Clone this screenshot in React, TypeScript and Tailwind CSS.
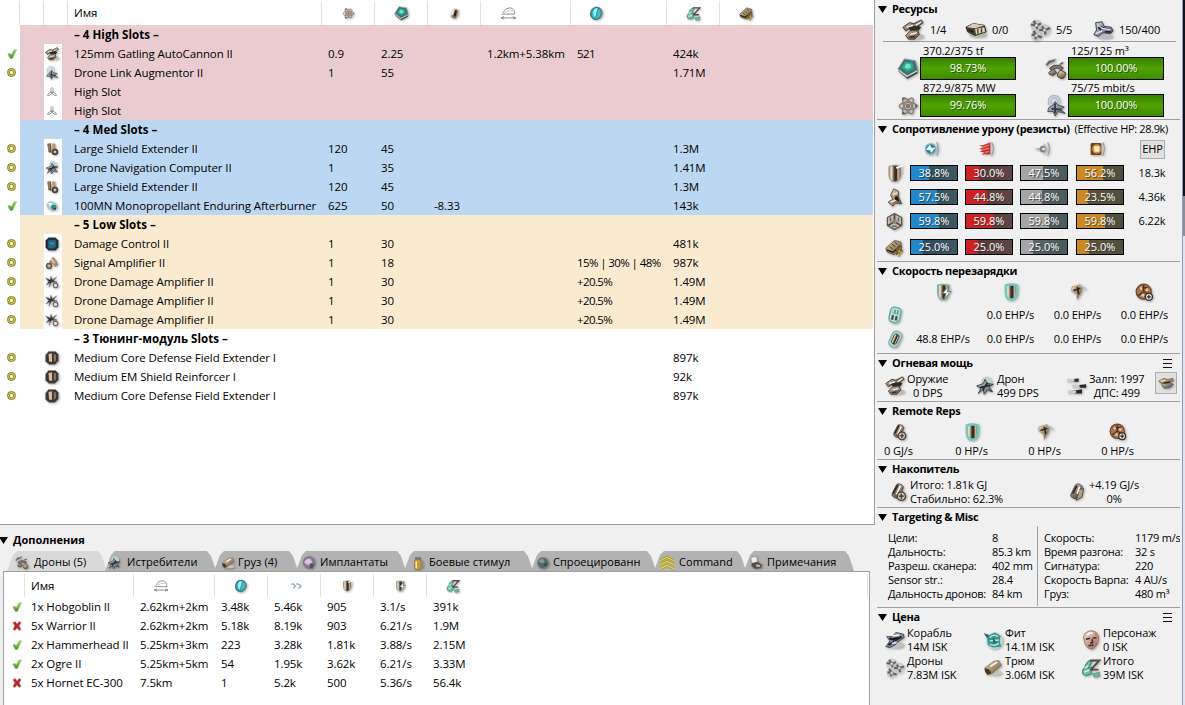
import type { ReactNode } from "react";

type IconName =
  | "check" | "ring" | "cross" | "gun" | "launcher" | "drones" | "fighter" | "cpu" | "atom" | "bay" | "antenna"
  | "em" | "thermal" | "kinetic" | "explosive" | "shield" | "armor" | "hull" | "pattern" | "shieldBolt"
  | "shieldGlow" | "armorRep" | "hullRep" | "battery2" | "battery1" | "drone" | "volley" | "cap" | "capPlain" | "capSwap"
  | "range" | "tracking" | "isk" | "speed" | "slot" | "extender" | "burner" | "control" | "signal" | "droneAmp"
  | "rig" | "implant" | "booster" | "globe" | "command" | "note" | "ship" | "fit" | "face" | "hold" | "gunSmall";

const shieldPath = "M5 3 Q12 1 20 3 L20 13 Q19 19 16 21 Q12 23 8 21 Q5 18 5 13Z";

const art: Record<IconName, ReactNode> = {
  check: <path d="M2 12 L7 10 L10 14 L17 2 L23 2 L13 23 L8 23Z" fill="url(#gGreen)" stroke="#7fae6c" strokeWidth="1" />,
  ring: (
    <g fill="none">
      <rect x="4.5" y="4.5" width="15" height="15" rx="6" stroke="#7f7c24" strokeWidth="7.5" />
      <rect x="4.5" y="4.5" width="15" height="15" rx="6" stroke="#cbc549" strokeWidth="3.4" />
    </g>
  ),
  cross: <path d="M2 4 L8 1 L12 7 L17 1 L22 4 L17 12 L22 20 L17 23 L12 17 L7 23 L2 20 L7 12Z" fill="#b3262b" stroke="#cf7777" strokeWidth="1" />,
  gun: (
    <g>
      <ellipse cx="16" cy="19" rx="8" ry="3" fill="#bdbab4" />
      <path d="M1 9 L8 4 L13 5 L21 1 L23 4 L16 9 L10 9 L4 13Z" fill="url(#gMetal)" stroke="#3b352e" />
      <path d="M7 9 L17 7 L21 9 L17 14 L9 13Z" fill="#322b24" />
      <path d="M9 13 L17 12 L19 17 L14 22 L7 22 L4 18Z" fill="url(#gMetal)" stroke="#4a4137" />
      <path d="M5 9 L12 7 M15 7 L21 3 M9 17 L16 15" stroke="#f4efe6" strokeWidth="1.6" />
      <path d="M8 20 L14 19" stroke="#2f2922" strokeWidth="1.6" />
    </g>
  ),
  gunSmall: (
    <g>
      <path d="M1 9 L9 5 L14 7 L22 5 L23 9 L14 11 L9 14 L4 12Z" fill="url(#gGold)" stroke="#6d5420" />
      <path d="M6 13 L16 11 L23 14 L18 19 L9 20 L6 16Z" fill="url(#gMetal)" stroke="#4f4f4f" />
      <path d="M4 9 L11 8" stroke="#ffe69c" strokeWidth="1.8" />
      <path d="M9 12 L18 11" stroke="#252525" strokeWidth="2.2" />
    </g>
  ),
  launcher: (
    <g>
      <ellipse cx="14" cy="17" rx="10" ry="3" fill="#b9b7ad" />
      <path d="M1 9 L9 5 L21 7 L23 14 L11 18 L3 14Z" fill="#4a4234" stroke="#2a261e" />
      <path d="M2 9 L9 5 L21 7 L11 10Z" fill="#d6cfb9" />
      <path d="M11 11 L21 9 L22 14 L12 17Z" fill="#d9cfae" />
      <path d="M14 11 V16 M18 10 V15" stroke="#4a4132" strokeWidth="1.4" />
      <path d="M3 11 L9 13 L9 15 L4 13Z" fill="#1c1812" />
    </g>
  ),
  drones: (
    <g>
      <g fill="none" stroke="#c2c2c2" strokeWidth="1.3">
        <circle cx="8" cy="7" r="5.5" /><circle cx="17" cy="12" r="5.5" /><circle cx="8" cy="18" r="5" />
      </g>
      <g stroke="#5f5f5f" strokeWidth="2.4" fill="none" strokeLinejoin="round">
        <path d="M2 6 L8 7 L13 5 M5 2 L8 7 L9 11" />
        <path d="M11 12 L17 12 L23 10 M14 8 L17 12 L18 17" />
        <path d="M3 17 L8 18 L14 20 M5 13 L8 18 L7 22" />
      </g>
      <g fill="#e2e2e2" stroke="#777" strokeWidth=".8"><circle cx="8" cy="7" r="1.8" /><circle cx="17" cy="12" r="1.8" /><circle cx="8" cy="18" r="1.8" /></g>
    </g>
  ),
  fighter: (
    <g>
      <ellipse cx="14" cy="19" rx="9" ry="2.5" fill="#b9bac4" />
      <path d="M4 4 L11 3 L13 8 L21 9 L23 13 L20 16 L12 15 L7 19 L2 17 L5 12Z" fill="url(#gSteel)" stroke="#3c3e4c" />
      <path d="M6 6 L11 10 L20 12 M4 16 L11 13" stroke="#e8ebf6" strokeWidth="1.3" />
      <path d="M7 9 L10 12 M14 14 L21 14" stroke="#262835" strokeWidth="2" />
    </g>
  ),
  cpu: (
    <g>
      <path d="M1 12 L11 20 L11 23 L2 15Z" fill="#6d7b7e" />
      <path d="M11 20 L23 14 L22 17 L11 23Z" fill="#394345" />
      <path d="M8 1 L20 3 L23 14 L11 20 L1 12Z" fill="#3f7370" stroke="#91a0a1" />
      <path d="M9 4 L17 5 L18 12 L11 15 L5 11Z" fill="#2da590" />
      <path d="M10 6 L15 7 L15 11 L11 12 L8 10Z" fill="#6ee3c8" />
      <path d="M2 13 L11 20 L22 14" stroke="#d5dbdb" fill="none" strokeWidth="1.2" />
    </g>
  ),
  atom: (
    <g fill="none" stroke="#8b8178" strokeWidth="1.6">
      <ellipse cx="12" cy="12" rx="9.5" ry="4" />
      <ellipse cx="12" cy="12" rx="9.5" ry="4" transform="rotate(60 12 12)" />
      <ellipse cx="12" cy="12" rx="9.5" ry="4" transform="rotate(120 12 12)" />
      <circle cx="12" cy="12" r="2.4" fill="#8e6f5c" stroke="none" />
      <g fill="#6e665f" stroke="none"><circle cx="7" cy="4" r="1.6" /><circle cx="21" cy="12" r="1.6" /><circle cx="7" cy="20" r="1.6" /></g>
    </g>
  ),
  bay: (
    <g>
      <path d="M1 7 L4 3 L12 1 L10 4 L5 6 L2 9Z" fill="#5d5c57" stroke="#a8a69d" />
      <path d="M5 11 L10 8 L16 8 L20 11 L17 13 L15 11 L11 11 L8 15Z" fill="#847a6c" stroke="#3c3833" />
      <path d="M4 16 L9 12 L13 16 L9 19 L5 18Z" fill="url(#gMetal)" stroke="#474037" />
      <path d="M16 7 L20 5" stroke="#6f6a60" strokeWidth="1.8" />
      <rect x="14" y="14" width="8" height="8" rx="3" transform="rotate(25 18 18)" fill="url(#gBronze)" stroke="#534839" />
    </g>
  ),
  antenna: (
    <g>
      <g fill="none" stroke="#9fb4cd" strokeWidth="1.1"><circle cx="10" cy="7" r="6.5" /><circle cx="10" cy="7" r="3.6" /></g>
      <path d="M4 14 L9 11 L11 7 L14 11 L21 13 L17 16 L22 20 L14 18 L11 23 L9 18 L3 18Z" fill="url(#gSteel)" stroke="#4a4d58" />
      <path d="M11 9 V20 M7 15 L18 16" stroke="#353b49" strokeWidth="2" />
    </g>
  ),
  em: (
    <g>
      <circle cx="10" cy="12" r="8" fill="#327c93" stroke="#90bdc9" strokeWidth="2" />
      <path d="M3 13 L9 5 L11 10 L17 10 L11 18 L9 14Z" fill="#e6faff" />
      <path d="M19 2 Q24 12 19 22" fill="none" stroke="#989898" strokeWidth="1.8" />
    </g>
  ),
  thermal: (
    <g>
      <path d="M0 7 L7 6 L17 2 L17 20 L8 20 L4 21 L8 17 L1 16 L7 13 L0 12 L8 9Z" fill="#c3322d" />
      <path d="M7 9 L15 6 M6 13 L15 11 M9 17 L15 16" stroke="#f2a08a" strokeWidth="1.4" />
      <path d="M19 2 Q24 12 19 22" fill="none" stroke="#989898" strokeWidth="1.8" />
    </g>
  ),
  kinetic: (
    <g>
      <path d="M1 11 L9 10 L9 14 L1 13Z" fill="#b8b8b8" />
      <circle cx="12" cy="12" r="4.5" fill="#8e8e8e" stroke="#686868" />
      <circle cx="13" cy="12" r="2" fill="#eee" />
      <path d="M13 4 Q21 12 13 20" fill="none" stroke="#b9b9b9" strokeWidth="1.8" />
      <path d="M19 2 Q24 12 19 22" fill="none" stroke="#989898" strokeWidth="1.8" />
    </g>
  ),
  explosive: (
    <g>
      <rect x="1" y="3" width="16" height="18" rx="2" fill="#704122" />
      <circle cx="10" cy="12" r="7" fill="#e38b3b" />
      <path d="M6 8 L14 8 L14 16 L7 16Z" fill="#fff3cf" />
      <path d="M19 2 Q24 12 19 22" fill="none" stroke="#989898" strokeWidth="1.8" />
    </g>
  ),
  shield: (
    <g>
      <circle cx="14" cy="8" r="8" fill="#dcd9d2" />
      <path d={shieldPath} fill="url(#gPlate)" stroke="#8c7f70" />
      <path d="M14 5 L23 2" stroke="#fff" strokeWidth="2" />
    </g>
  ),
  armor: (
    <g>
      <path d="M11 1 L17 4 L17 11 L21 20 L13 19 L10 23 L4 18 L10 14 L7 9Z" fill="url(#gBronze)" stroke="#4b4035" />
      <path d="M10 8 L16 6 M7 18 L14 15" stroke="#efe7db" strokeWidth="1.8" />
      <path d="M12 11 L16 10 L18 17 L13 15Z" fill="#211b17" />
    </g>
  ),
  hull: (
    <g>
      <path d="M12 2 L21 7 L21 17 L12 22 L3 17 L3 7Z" fill="#c3bfb6" stroke="#5e574e" strokeWidth="1.6" />
      <path d="M12 3 V12 L4 17 M12 12 L20 17" stroke="#544c43" strokeWidth="2.4" fill="none" />
      <circle cx="12" cy="12" r="3" fill="#8d8376" />
      <path d="M7 7 V12 M17 7 V12 M9 18 L15 18" stroke="#6e665c" strokeWidth="2" />
    </g>
  ),
  pattern: (
    <g>
      <path d="M1 13 L12 3 L20 5 L21 12 L12 21 L3 18Z" fill="url(#gGold)" stroke="#5a4d36" />
      <path d="M2 15 L10 18 L19 10" stroke="#2f2619" strokeWidth="2" fill="none" />
      <path d="M6 11 L10 14 M9 8 L13 11 M12 5 L16 8" stroke="#3e3222" strokeWidth="1.2" />
      <path d="M14 13 L20 9 L22 16 L14 22Z" fill="#6b5943" />
      <path d="M20 12 L15 19 L19 18 L17 24 L23 16 L19 17Z" fill="#e0b93b" stroke="#6c551a" strokeWidth=".6" />
    </g>
  ),
  shieldBolt: (
    <g>
      <path d={shieldPath} fill="url(#gPlate)" stroke="#79b5a5" strokeWidth="2" />
      <path d="M19 5 L11 14 L16 14 L13 22 L23 11 L18 12Z" fill="#f5f5ef" stroke="#615f56" />
    </g>
  ),
  shieldGlow: <path d={shieldPath} fill="url(#gPlate)" stroke="#6bcdc1" strokeWidth="3" />,
  armorRep: (
    <g>
      <path d="M4 5 L15 2 L18 7 L17 12 L11 22 L10 15 L3 10Z" fill="url(#gBronze)" stroke="#b2a085" />
      <path d="M11 5 L13 15 M6 10 L15 7" stroke="#33281d" strokeWidth="2.2" />
      <path d="M15 5 Q20 3 23 10" fill="none" stroke="#a9c3cf" strokeWidth="1.4" />
    </g>
  ),
  hullRep: (
    <g>
      <circle cx="11" cy="11" r="9.5" fill="#a87550" stroke="#6b4a33" strokeWidth="1.6" />
      <path d="M11 2 V11 L4 16 M11 11 L18 15 M5 7 L16 6" stroke="#4c3021" strokeWidth="1.7" fill="none" />
      <g fill="#e8caa7"><circle cx="7.5" cy="7" r="1.8" /><circle cx="15" cy="8.5" r="1.8" /><circle cx="10" cy="15.5" r="1.8" /></g>
      <circle cx="17.5" cy="17.5" r="4.5" fill="#efe9e1" stroke="#3a3028" strokeWidth="1.7" />
      <path d="M15 17.5 H20 M17.5 15 V20" stroke="#2b241e" strokeWidth="1.5" />
    </g>
  ),
  battery2: (
    <g transform="rotate(12 12 12)">
      <rect x="5" y="2" width="14" height="20" rx="5" fill="#bfe0da" stroke="#62b3aa" strokeWidth="2" />
      <path d="M8 5 H16 V11 H8Z" fill="#5aa39a" />
      <path d="M9 4 V12 M13 4 V12" stroke="#dff5f1" />
      <path d="M8 13 H11 V19 H8Z M13 13 H16 V19 H13Z" fill="#4f463d" />
    </g>
  ),
  battery1: (
    <g>
      <rect x="6" y="1" width="13" height="22" rx="6" transform="rotate(24 12 12)" fill="#a9d4cd" stroke="#78b6ae" strokeWidth="1.6" />
      <rect x="9" y="5" width="7" height="14" rx="3" transform="rotate(24 12 12)" fill="url(#gPlate)" stroke="#443d33" />
    </g>
  ),
  drone: (
    <g>
      <circle cx="14" cy="7" r="6.5" fill="#bcd3ce" />
      <path d="M2 12 L10 9 L12 4 L15 9 L22 10 L17 13 L21 19 L15 17 L11 22 L10 16 L4 21 L7 15Z" fill="url(#gSteel)" stroke="#41484a" strokeWidth="1.2" />
      <path d="M6 14 L18 11 M9 17 L15 8" stroke="#262d2e" strokeWidth="2" />
    </g>
  ),
  volley: (
    <g>
      <path d="M4 4 L14 3 L14 7 L8 7Z M12 11 L23 10 L23 14 L16 14Z M5 18 L18 16 L18 21 L10 21Z" fill="#26282b" />
      <path d="M0 5 H9 M6 12 H15 M1 19 H11" stroke="#c5d0cf" strokeWidth="3" />
    </g>
  ),
  cap: (
    <g>
      <rect x="7" y="2" width="9" height="17" rx="3" transform="rotate(26 11 11)" fill="url(#gMetal)" stroke="#574d43" />
      <path d="M12 3 L6 14" stroke="#352c26" strokeWidth="2.4" />
      <path d="M15 5 L10 15" stroke="#fff" strokeWidth="1.6" />
      <circle cx="16" cy="17" r="5" fill="#d2c5b6" stroke="#544639" strokeWidth="1.8" />
      <path d="M13 17 H19 M16 14 V20" stroke="#392e25" strokeWidth="1.5" />
    </g>
  ),
  capPlain: (
    <g>
      <rect x="7" y="3" width="11" height="18" rx="5" transform="rotate(20 12 12)" fill="url(#gBronze)" stroke="#c0ad92" />
      <path d="M15 6 L12 17" stroke="#2d231a" strokeWidth="4" />
      <path d="M10 6 L7 15" stroke="#fff4e2" strokeWidth="2" />
    </g>
  ),
  capSwap: (
    <g>
      <rect x="7" y="2" width="9" height="18" rx="3" transform="rotate(26 11 11)" fill="url(#gMetal)" stroke="#574d43" />
      <path d="M12 4 L7 14" stroke="#352c26" strokeWidth="2.4" />
      <path d="M14 9 L20 8 L18 18 L11 22 L13 16Z" fill="#b3a084" stroke="#473b2b" />
      <path d="M15 6 L12 14" stroke="#fff" strokeWidth="1.8" />
    </g>
  ),
  range: (
    <g fill="none" stroke="#858585" strokeWidth="1.5">
      <path d="M3 11 Q7 3 15 3 Q22 4 22 13 H1" />
      <path d="M5 10 Q12 6 20 8" stroke="#c9c9c9" />
      <path d="M0 19 H24 M5 17 L0 19 L5 21 M19 17 L24 19 L19 21" />
    </g>
  ),
  tracking: (
    <g>
      <ellipse cx="11.5" cy="12" rx="8.5" ry="9.5" transform="rotate(20 12 12)" fill="#32c2d3" stroke="#467880" strokeWidth="2.6" />
      <path d="M8 6 Q12 2 14 5 L10 18 Q5 13 8 6Z" fill="#9df0f5" />
      <path d="M14 5 L11 19" stroke="#3e8994" strokeWidth="1.4" />
      <path d="M19 5 Q24 12 17 20" stroke="#8a8478" strokeWidth="1.7" fill="none" />
    </g>
  ),
  isk: (
    <g>
      <path d="M5 10 Q9 1 13 4 L9 12 L13 11 L12 19 L7 21 Q1 21 2 15Z" fill="#6fbfaa" stroke="#3c8a78" strokeWidth="1.4" />
      <path d="M4 12 L9 9 M4 17 L11 14" stroke="#ddf7ee" strokeWidth="1.5" />
      <path d="M11 3 H22 L12 14 H21" fill="none" stroke="#524b4a" strokeWidth="2.3" />
      <path d="M14 19 L22 17 L22 22 L16 23Z" fill="#69baa5" stroke="#4c9a86" />
    </g>
  ),
  speed: <path d="M3 7 L9 12 L5 17 M13 7 L20 12 L15 17 M0 8 H4 M10 8 H14" fill="none" stroke="#859eab" strokeWidth="2.4" />,
  slot: (
    <g fill="none" stroke="#858585" strokeWidth="1.6">
      <path d="M10 12 L10 5 Q12 1 14 5 L14 12 L20 16 Q23 20 18 19 L12 15 L6 19 Q1 20 4 16Z" />
      <circle cx="12" cy="13" r="1.6" fill="#777" />
    </g>
  ),
  extender: (
    <g>
      <path d="M4 3 L10 2 L11 19 L6 17Z" fill="#6b5134" />
      <path d="M12 2 L18 3 L18 13 L13 18Z" fill="#b99a7c" />
      <path d="M7 4 V15" stroke="#cdb79c" strokeWidth="1.4" />
      <circle cx="17" cy="17" r="5" fill="#6f594a" stroke="#3c2e25" strokeWidth="1.5" />
      <circle cx="17" cy="17" r="1.8" fill="#ece1d7" />
    </g>
  ),
  burner: (
    <g>
      <ellipse cx="12" cy="12" rx="9" ry="7" transform="rotate(25 12 12)" fill="#b7c9c8" stroke="#98b5b3" />
      <ellipse cx="15" cy="14" rx="4.5" ry="4" fill="#208e8c" />
      <path d="M5 7 L13 7 L9 13Z" fill="#f6ffff" />
      <path d="M13 17 L19 15 L18 19Z" fill="#2f3f40" />
    </g>
  ),
  control: (
    <g>
      <path d="M6 1 H18 L23 6 V18 L18 23 H6 L1 18 V6Z" fill="#20303d" />
      <path d="M6 6 H18 V17 L14 19 H6Z" fill="#1c6f87" stroke="#34586a" strokeWidth="1.6" />
      <path d="M9 11 H15" stroke="#3fa3b8" strokeWidth="2" />
    </g>
  ),
  signal: (
    <g>
      <path d="M8 10 L14 2 L19 8 L22 15 L17 18 L13 11 L10 15Z" fill="#b78d6c" stroke="#8c6549" />
      <path d="M10 4 L16 12" stroke="#ecd9c8" strokeWidth="2.4" />
      <circle cx="7" cy="17" r="4.8" fill="#8a7e65" stroke="#4c4535" strokeWidth="1.6" />
      <circle cx="7" cy="17" r="1.5" fill="#e5dfcc" />
    </g>
  ),
  droneAmp: (
    <g>
      <path d="M1 5 L9 8 L10 2 L13 8 L20 3 L15 10 L18 12 L11 13 L7 21 L8 14 L2 17 L6 11Z" fill="#30363b" stroke="#848b8f" />
      <circle cx="18" cy="18" r="3.8" fill="#e8e2da" stroke="#6b6052" strokeWidth="2" />
      <path d="M14 12 H21" stroke="#5c544a" strokeWidth="1.8" />
    </g>
  ),
  rig: (
    <g>
      <path d="M6 1 H18 L23 6 V17 L17 23 H7 L1 18 V7Z" fill="#3a3534" stroke="#8c8684" />
      <path d="M6 5 L12 4 V19 L7 18Z" fill="#d7bd9e" />
      <path d="M15 5 L19 6 V16 L15 19Z" fill="#8b715e" />
    </g>
  ),
  implant: (
    <g>
      <circle cx="12" cy="11" r="10" fill="#8e7c98" stroke="#6b5d75" />
      <path d="M4 11 Q7 3 14 5 Q19 9 16 14 L9 15Z" fill="#d8c8dd" />
      <path d="M14 12 L21 14 L18 22 L13 20Z" fill="#5c4c66" />
    </g>
  ),
  booster: (
    <g>
      <rect x="6" y="6" width="11" height="17" rx="3" fill="#d09a2b" stroke="#7a6846" />
      <path d="M7 2 H17 V7 H7Z" fill="#777" />
      <path d="M9 9 V21" stroke="#fff0bd" strokeWidth="2.5" />
      <path d="M18 8 L21 10 V20 L18 22Z" fill="#948b7d" />
    </g>
  ),
  globe: (
    <g>
      <circle cx="12" cy="12" r="9.5" fill="#55686b" stroke="#77878a" strokeWidth="1.5" />
      <path d="M4 9 L11 4 L15 9 L11 13Z" fill="#7f9a99" />
      <path d="M12 15 L19 11 L18 18Z" fill="#3b4a50" />
    </g>
  ),
  command: (
    <g fill="none">
      <path d="M0 8 L12 2 L24 8 M0 15 L12 9 L24 15 M0 22 L12 16 L24 22" stroke="#9b9120" strokeWidth="4.4" />
      <path d="M0 8 L12 2 L24 8 M0 15 L12 9 L24 15 M0 22 L12 16 L24 22" stroke="#e2d744" strokeWidth="2.4" />
    </g>
  ),
  note: (
    <g>
      <path d="M3 2 L13 1 L15 12 L5 14Z" fill="#f0ebe0" stroke="#8e877a" />
      <path d="M5 12 L14 10 L23 15 L20 21 L10 22 L4 17Z" fill="#55504c" />
      <path d="M13 14 L20 16 L18 19 L12 18Z" fill="#c6bfb2" />
    </g>
  ),
  ship: (
    <g>
      <ellipse cx="13" cy="18" rx="10" ry="4" fill="#bcbfc3" />
      <path d="M1 20 L6 13 L2 8 L9 8 L13 3 L22 5 L23 9 L17 13 L12 18 L6 21Z" fill="url(#gSteel)" stroke="#343a42" />
      <path d="M5 10 L13 12 L20 8 M4 18 L11 14" stroke="#1b2026" strokeWidth="2.6" />
      <path d="M9 7 L17 6 M8 16 L14 15" stroke="#eff6ff" strokeWidth="1.7" />
    </g>
  ),
  fit: (
    <g>
      <circle cx="14" cy="13" r="10" fill="#b7d7d4" />
      <path d="M1 4 L8 6 L14 3 L21 7 L20 14 L22 20 L12 21 L6 18 L5 10Z" fill="#3a938d" />
      <path d="M8 9 Q13 4 18 8 M8 13 L19 12 M8 17 Q14 20 19 16" stroke="#b0e8df" strokeWidth="1.7" fill="none" />
      <path d="M12 8 L16 15 L12 17Z" fill="#27716d" />
      <path d="M1 4 L7 7 L5 9Z" fill="#304f52" />
    </g>
  ),
  face: (
    <g>
      <path d="M3 8 Q5 1 13 1 Q21 2 21 10 Q21 18 14 23 Q8 23 5 17Z" fill="url(#gSkin)" stroke="#96675a" />
      <path d="M6 11 L11 10 M14 10 L19 9 M13 11 L14 15 L11 16 M9 19 L15 18" stroke="#402b27" strokeWidth="1.8" fill="none" />
      <path d="M17 4 Q21 8 19 15" fill="none" stroke="#df8263" strokeWidth="1.8" />
      <path d="M7 6 Q10 3 14 4" fill="none" stroke="#fff" strokeWidth="2" />
    </g>
  ),
  hold: (
    <g>
      <ellipse cx="15" cy="18" rx="8" ry="3" fill="#c5c2bb" />
      <path d="M2 12 L13 4 L19 3 L22 9 L11 19 L5 20Z" fill="url(#gBronze)" stroke="#887b68" />
      <path d="M2 13 Q7 11 10 18 L6 20 Q2 18 2 13Z" fill="#4a3623" />
      <path d="M9 10 L17 5" stroke="#fffaf0" strokeWidth="2" />
    </g>
  ),
};

const flat: IconName[] = ["check", "ring", "cross", "slot", "range", "speed", "command"];

function Icon({ name, className = "size-4" }: { name: IconName; className?: string }) {
  const shade = flat.includes(name) ? "" : "drop-shadow-[1px_1px_1px_rgba(0,0,0,0.3)]";
  return (
    <svg viewBox="0 0 24 24" className={`shrink-0 ${shade} ${className}`} aria-hidden="true">
      {art[name]}
    </svg>
  );
}

function Gradients() {
  return (
    <svg className="absolute size-0" aria-hidden="true">
      <defs>
        <linearGradient id="gGreen" x1="0" y1="0" x2="0" y2="1"><stop offset="0" stopColor="#a6dd5a" /><stop offset="1" stopColor="#3c9020" /></linearGradient>
        <linearGradient id="gMetal" x1="0" y1="0" x2="1" y2="1"><stop offset="0" stopColor="#ddd5c8" /><stop offset=".5" stopColor="#8a7d6e" /><stop offset="1" stopColor="#564b41" /></linearGradient>
        <linearGradient id="gSteel" x1="0" y1="0" x2="1" y2="1"><stop offset="0" stopColor="#c8ced8" /><stop offset="1" stopColor="#545b68" /></linearGradient>
        <linearGradient id="gGold" x1="0" y1="0" x2="1" y2="1"><stop offset="0" stopColor="#d6c39b" /><stop offset="1" stopColor="#745d38" /></linearGradient>
        <linearGradient id="gBronze" x1="0" y1="0" x2="1" y2="1"><stop offset="0" stopColor="#efe2cc" /><stop offset=".5" stopColor="#aa916f" /><stop offset="1" stopColor="#5a442d" /></linearGradient>
        <linearGradient id="gSkin" x1="0" y1="0" x2="1" y2="1"><stop offset="0" stopColor="#f3e1d7" /><stop offset="1" stopColor="#9a5f4e" /></linearGradient>
        <linearGradient id="gPlate"><stop offset="0" stopColor="#a58b6d" /><stop offset=".2" stopColor="#f3e9da" /><stop offset=".42" stopColor="#6b5843" /><stop offset=".5" stopColor="#3b2d20" /><stop offset=".65" stopColor="#3b2d20" /><stop offset=".75" stopColor="#cdbda8" /><stop offset="1" stopColor="#6b5b4b" /></linearGradient>
      </defs>
    </svg>
  );
}

type Status = "check" | "ring" | "cross" | null;
type Module = { status: Status; icon: IconName; cells: string[] };
type Rack = { title: string; tint: string; rows: Module[] };

const mod = (status: Status, icon: IconName, ...cells: string[]): Module => ({ status, icon, cells });

const racks: Rack[] = [
  {
    title: "– 4 High Slots –", tint: "bg-[#eaccd0]",
    rows: [
      mod("check", "gun", "125mm Gatling AutoCannon II", "0.9", "2.25", "", "1.2km+5.38km", "521", "424k"),
      mod("ring", "antenna", "Drone Link Augmentor II", "1", "55", "", "", "", "1.71M"),
      mod(null, "slot", "High Slot"),
      mod(null, "slot", "High Slot"),
    ],
  },
  {
    title: "– 4 Med Slots –", tint: "bg-[#bcd7f1]",
    rows: [
      mod("ring", "extender", "Large Shield Extender II", "120", "45", "", "", "", "1.3M"),
      mod("ring", "drone", "Drone Navigation Computer II", "1", "35", "", "", "", "1.41M"),
      mod("ring", "extender", "Large Shield Extender II", "120", "45", "", "", "", "1.3M"),
      mod("check", "burner", "100MN Monopropellant Enduring Afterburner", "625", "50", "-8.33", "", "", "143k"),
    ],
  },
  {
    title: "– 5 Low Slots –", tint: "bg-[#faebd0]",
    rows: [
      mod("ring", "control", "Damage Control II", "1", "30", "", "", "", "481k"),
      mod("ring", "signal", "Signal Amplifier II", "1", "18", "", "", "15% | 30% | 48%", "987k"),
      mod("ring", "droneAmp", "Drone Damage Amplifier II", "1", "30", "", "", "+20.5%", "1.49M"),
      mod("ring", "droneAmp", "Drone Damage Amplifier II", "1", "30", "", "", "+20.5%", "1.49M"),
      mod("ring", "droneAmp", "Drone Damage Amplifier II", "1", "30", "", "", "+20.5%", "1.49M"),
    ],
  },
  {
    title: "– 3 Тюнинг-модуль Slots –", tint: "bg-white",
    rows: [
      mod("ring", "rig", "Medium Core Defense Field Extender I", "", "", "", "", "", "897k"),
      mod("ring", "rig", "Medium EM Shield Reinforcer I", "", "", "", "", "", "92k"),
      mod("ring", "rig", "Medium Core Defense Field Extender I", "", "", "", "", "", "897k"),
    ],
  },
];

const fitCols = "grid grid-cols-[20px_24px_24px_254px_53px_53px_53px_90px_96px_53px_1fr]";
const droneCols = "grid grid-cols-[21px_109px_81px_53px_53px_53px_53px_1fr]";

function FittingTable() {
  const heads: IconName[] = ["atom", "cpu", "capPlain", "range", "tracking", "isk", "pattern"];
  return (
    <div className="h-[525px] w-[875px] border-r border-b border-[#a0a0a0] bg-white">
      <div className={`${fitCols} h-[25px] pt-px`}>
        <div className="border-r border-[#e2e2e2]" />
        <div className="border-r border-[#e2e2e2]" />
        <div className="border-r border-[#e2e2e2]" />
        <div className="border-r border-[#e2e2e2] pl-[6px] leading-[24px]">Имя</div>
        {heads.map((h, i) => (
          <div
            key={h}
            className={`flex items-center ${h === "range" ? "pl-[20px]" : h === "tracking" ? "pl-[18px]" : "justify-center"} ${i < 6 ? "border-r border-[#e2e2e2]" : "w-[53px]"}`}
          >
            <Icon name={h} className={h === "capPlain" || h === "atom" ? "size-[13px]" : "size-[15px]"} />
          </div>
        ))}
      </div>
      {racks.map((rack) => (
        <div key={rack.title} className="flex w-[873px]">
          <div className="w-5 pt-[19px]">
            {rack.rows.map((row, i) => (
              <div key={i} className="flex h-[19px] items-center justify-end pr-[3px]">
                {row.status && <Icon name={row.status} className={row.status === "ring" ? "mr-px size-[9px]" : "size-[10px]"} />}
              </div>
            ))}
          </div>
          <div className={`flex-1 ${rack.tint}`}>
            <div className="h-[19px] pl-[54px] text-[11.5px] font-bold leading-[19px] tracking-[0.05px]">{rack.title}</div>
            {rack.rows.map((row, i) => (
              <div key={i} className="grid h-[19px] grid-cols-[24px_18px_12px_254px_53px_53px_53px_90px_96px_1fr] leading-[19px]">
                <div />
                <div className="flex items-center bg-white pl-px">
                  <Icon name={row.icon} className={row.icon === "slot" ? "ml-px size-[12px]" : "size-[14px]"} />
                </div>
                <div />
                {row.cells.map((c, j) => (
                  <div key={j} className={`whitespace-pre ${j === 5 ? "tracking-[-0.6px]" : ""}`}>{c}</div>
                ))}
              </div>
            ))}
          </div>
        </div>
      ))}
    </div>
  );
}

const tabs: { label: string; icon: IconName; box: string; gap: string }[] = [
  { label: "Дроны (5)", icon: "bay", box: "w-[100px] pl-[8px]", gap: "gap-[5px]" },
  { label: "Истребители", icon: "drone", box: "w-[111px] pl-[2px]", gap: "gap-[6px]" },
  { label: "Груз (4)", icon: "hold", box: "w-[84px] pl-[7px]", gap: "gap-[3px]" },
  { label: "Имплантаты", icon: "implant", box: "w-[110px] pl-[6px]", gap: "gap-[4px]" },
  { label: "Боевые стимул", icon: "booster", box: "w-[129px] pl-[7px]", gap: "gap-[4px]" },
  { label: "Спроецированн", icon: "globe", box: "w-[125px] pl-[5px]", gap: "gap-[3px]" },
  { label: "Command", icon: "command", box: "w-[92px] pl-[6px]", gap: "gap-[5px]" },
  { label: "Примечания", icon: "note", box: "w-[110px] pl-[5px]", gap: "gap-[4px]" },
];

const drones: { status: Status; cells: string[] }[] = [
  { status: "check", cells: ["1x Hobgoblin II", "2.62km+2km", "3.48k", "5.46k", "905", "3.1/s", "391k"] },
  { status: "cross", cells: ["5x Warrior II", "2.62km+2km", "5.18k", "8.19k", "903", "6.21/s", "1.9M"] },
  { status: "check", cells: ["2x Hammerhead II", "5.25km+3km", "223", "3.28k", "1.81k", "3.88/s", "2.15M"] },
  { status: "check", cells: ["2x Ogre II", "5.25km+5km", "54", "1.95k", "3.62k", "6.21/s", "3.33M"] },
  { status: "cross", cells: ["5x Hornet EC-300", "7.5km", "1", "5.2k", "500", "5.36/s", "56.4k"] },
];

function Additions() {
  const heads: IconName[] = ["range", "tracking", "speed", "shield", "shieldBolt", "isk"];
  return (
    <div className="flex h-[180px] w-[875px] flex-col">
      <div className="-ml-px flex h-[26px] items-center gap-[5px] pt-[4px] text-[11px] font-bold">
        <Triangle />
        <span className="tracking-normal">Дополнения</span>
      </div>
      <div className="flex h-[20px] pl-[7px] text-[11px] tracking-[0.05px]">
        {tabs.map((t, i) => (
          <div
            key={t.label}
            className={`-mr-[2px] flex h-[20px] items-center pt-[3px] whitespace-nowrap [clip-path:polygon(0_100%,6px_20%,10px_0,calc(100%-9px)_0,calc(100%-5px)_25%,100%_100%)] ${t.box} ${t.gap} ${i === 0 ? "bg-[#d9d9d9]" : "bg-[#b2b2b2]"}`}
          >
            <Icon name={t.icon} className="size-[14px]" />
            {t.label}
          </div>
        ))}
      </div>
      <div className="ml-[3px] w-[867px] flex-1 border border-b-0 border-[#a0a0a0] bg-white">
        <div className={`${droneCols} mr-px h-[25px] pt-[2px]`}>
          <div className="border-r border-[#e2e2e2]" />
          <div className="border-r border-[#e2e2e2] pl-[6px] leading-[23px]">Имя</div>
          {heads.map((h, i) => (
            <div
              key={h}
              className={`flex items-center border-r border-[#e2e2e2] ${i === 5 ? "pl-[19px]" : i === 0 ? "pl-[20px]" : i === 2 ? "pl-[23px]" : "justify-center"}`}
            >
              <Icon name={h} className={h === "shield" || h === "shieldBolt" || h === "speed" ? "size-3" : "size-[14px]"} />
            </div>
          ))}
        </div>
        {drones.map((d) => (
          <div key={d.cells[0]} className="grid h-[19px] grid-cols-[27px_109px_81px_53px_53px_53px_53px_1fr] leading-[19px]">
            <div className="flex items-center pl-[8px]">{d.status && <Icon name={d.status} className="size-[10px]" />}</div>
            {d.cells.map((c, j) => <div key={j} className="whitespace-pre">{c}</div>)}
          </div>
        ))}
      </div>
    </div>
  );
}

function Triangle() {
  return (
    <svg viewBox="0 0 9 7" className="h-[7px] w-[9px] shrink-0" aria-hidden="true"><path d="M0 0H9L4.5 7Z" /></svg>
  );
}

function Menu() {
  return (
    <svg viewBox="0 0 9 9" className="ml-auto size-[9px]" aria-hidden="true"><path d="M0 .5H9M0 4.5H9M0 8.5H9" stroke="#111" /></svg>
  );
}

function Section({ title, extra, menu, frame, children }: { title: string; extra?: ReactNode; menu?: boolean; frame: string; children: ReactNode }) {
  return (
    <section className={`mx-[2px] w-[303px] overflow-hidden ${frame}`}>
      <div className="flex h-[19px] items-center pr-[8px] pl-px">
        <Triangle />
        <h2 className="ml-[5px] font-bold tracking-[-0.3px] whitespace-nowrap">{title}</h2>
        {extra}
        {menu && <Menu />}
      </div>
      {children}
    </section>
  );
}

function Usage({ icon, label, value }: { icon: IconName; label: string; value: string }) {
  return (
    <div className="flex w-[148px] pl-px">
      <Icon name={icon} className="mt-[15px] mr-px size-[22px]" />
      <div>
        <div className="h-[14px] pl-[3px] leading-[15px] whitespace-nowrap">{label}</div>
        <div className="flex h-[23px] w-[96px] items-center justify-center border border-black bg-linear-to-b from-[#397f00] via-[#4fa400] to-[#3f8a00] text-white [text-shadow:1px_1px_1px_#234a00]">
          {value}
        </div>
      </div>
    </div>
  );
}

const resistTypes = [
  { fill: "bg-[#2288cc]", base: "mr-[7px] bg-linear-to-r from-[#29495c] to-[#3b5965]" },
  { fill: "bg-[#cc2222]", base: "mr-[7px] bg-linear-to-r from-[#5b3033] to-[#5e4747]" },
  { fill: "bg-[#a5a5a5]", base: "mr-[8px] bg-linear-to-r from-[#5e6d6f] to-[#485b5e]" },
  { fill: "bg-[#cc8822]", base: "mr-[7px] bg-linear-to-r from-[#665235] to-[#4e513f]" },
];

const resists: { icon: IconName; values: number[]; ehp: string; space: string }[] = [
  { icon: "shield", values: [38.8, 30.0, 47.5, 56.2], ehp: "18.3k", space: "mb-[8px]" },
  { icon: "armor", values: [57.5, 44.8, 44.8, 23.5], ehp: "4.36k", space: "mb-[8px]" },
  { icon: "hull", values: [59.8, 59.8, 59.8, 59.8], ehp: "6.22k", space: "mb-[10px]" },
  { icon: "pattern", values: [25.0, 25.0, 25.0, 25.0], ehp: "", space: "" },
];

function TwoLine({ icon, a, b, className = "", centered }: { icon: IconName; a: string; b: string; className?: string; centered?: boolean }) {
  return (
    <div className={`flex h-7 items-center leading-[14px] whitespace-nowrap ${className}`}>
      <Icon name={icon} className="mr-[2px] size-5" />
      <div className={centered ? "text-center" : ""}>
        <div>{a}</div>
        <div>{b}</div>
      </div>
    </div>
  );
}

function Pairs({ rows, cols }: { rows: [string, string][]; cols: string }) {
  return (
    <div className={`grid leading-[14px] whitespace-nowrap ${cols}`}>
      {rows.map(([k, v]) => (
        <div key={k} className="contents">
          <div className="tracking-[-0.25px]">{k}</div>
          <div className="tracking-[-0.25px]">{v}</div>
        </div>
      ))}
    </div>
  );
}

function StatsPanel() {
  return (
    <aside className="h-[705px] w-[308px] border-r border-[#8f9db5] bg-[#f0f0f0] text-[11px] tracking-[-0.1px]">
      <Section title="Ресурсы" frame="h-[120px] border-b border-[#a0a0a0]">
        <div className="flex h-[22px] items-center pl-[25px]">
          <div className="flex w-[63px] items-center gap-[6px]"><Icon name="gun" className="size-[22px]" />1/4</div>
          <div className="flex w-[64px] items-center gap-[5px]"><Icon name="launcher" className="size-[22px]" />0/0</div>
          <div className="flex w-[63px] items-center gap-[5px]"><Icon name="drones" className="size-[22px]" />5/5</div>
          <div className="flex items-center gap-[5px]"><Icon name="fighter" className="size-[22px]" />150/400</div>
        </div>
        <div className="mr-[4px] ml-[6px] h-px bg-[#a0a0a0]" />
        <div className="grid grid-cols-[148px_148px] pt-px pl-[19px]">
          <Usage icon="cpu" label="370.2/375 tf" value="98.73%" />
          <Usage icon="bay" label="125/125 m³" value="100.00%" />
          <Usage icon="atom" label="872.9/875 MW" value="99.76%" />
          <Usage icon="antenna" label="75/75 mbit/s" value="100.00%" />
        </div>
      </Section>
      <Section
        title="Сопротивление урону (резисты)"
        frame="h-[142px] border-b border-[#a0a0a0]"
        extra={<span className="ml-[5px] tracking-[-0.35px] whitespace-nowrap">(Effective HP: 28.9k)</span>}
      >
        <div className="flex h-[20px] items-center pl-[27px]">
          {(["em", "thermal", "kinetic", "explosive"] as IconName[]).map((n) => (
            <div key={n} className="flex w-[55.5px] justify-center"><Icon name={n} className="size-4" /></div>
          ))}
          <div className="ml-[14px] flex h-[19px] w-[25px] items-center justify-center border border-[#adadad] bg-[#e1e1e1]">EHP</div>
        </div>
        <div className="pt-[6px]">
          {resists.map((r) => (
            <div key={r.icon} className={`flex h-4 items-center pl-[9px] ${r.space}`}>
              <Icon name={r.icon} className="mr-[6px] -ml-px size-[19px]" />
              {r.values.map((v, i) => (
                <div key={i} className={`relative h-4 w-12 border border-black ${resistTypes[i].base}`}>
                  <div className={`h-full ${resistTypes[i].fill}`} style={{ width: `${v}%` }} />
                  <span className="absolute inset-0 text-center leading-[14px] tracking-normal text-white [text-shadow:1px_1px_1px_#333]">{v.toFixed(1)}%</span>
                </div>
              ))}
              <div className="w-[42px] text-center">{r.ehp}</div>
            </div>
          ))}
        </div>
      </Section>
      <Section title="Скорость перезарядки" frame="h-[92px] border-b border-[#a0a0a0]">
        <div className="grid grid-cols-[32px_68px_67px_67px_67px] items-center justify-items-center whitespace-nowrap">
          <div className="h-[22px]" />
          <Icon name="shieldBolt" className="size-[18px]" />
          <Icon name="shieldGlow" className="size-[18px]" />
          <Icon name="armorRep" className="size-[18px]" />
          <Icon name="hullRep" className="size-[19px]" />
          <div className="flex h-6 items-center pl-[4px]"><Icon name="battery2" className="size-[18px]" /></div>
          <div /><div>0.0 EHP/s</div><div>0.0 EHP/s</div><div>0.0 EHP/s</div>
          <div className="flex h-6 items-center pl-[4px]"><Icon name="battery1" className="size-[18px]" /></div>
          <div>48.8 EHP/s</div><div>0.0 EHP/s</div><div>0.0 EHP/s</div><div>0.0 EHP/s</div>
        </div>
      </Section>
      <Section title="Огневая мощь" menu frame="h-[48px] border-b border-[#a0a0a0]">
        <div className="-mt-px flex pl-[8px]">
          <TwoLine icon="gun" a="Оружие" b="0 DPS" className="w-[90px]" centered />
          <TwoLine icon="drone" a="Дрон" b="499 DPS" className="w-[92px]" />
          <TwoLine icon="volley" a="Залп: 1997" b="ДПС: 499" className="w-[88px]" centered />
          <div className="flex size-[22px] items-center justify-center border border-[#adadad] bg-[#e1e1e1]"><Icon name="gunSmall" className="size-4" /></div>
        </div>
      </Section>
      <Section title="Remote Reps" frame="h-[58px] border-b border-[#a0a0a0]">
        <div className="grid grid-cols-[73px_73px_73px_73px] pl-[5px]">
          {([["cap", "0 GJ/s"], ["shieldGlow", "0 HP/s"], ["armorRep", "0 HP/s"], ["hullRep", "0 HP/s"]] as [IconName, string][]).map(([n, t]) => (
            <div key={n} className="flex w-[33px] flex-col items-center whitespace-nowrap">
              <div className="flex h-[22px] items-center"><Icon name={n} className="size-[18px]" /></div>
              <div className="leading-[15px]">{t}</div>
            </div>
          ))}
        </div>
      </Section>
      <Section title="Накопитель" frame="h-[48px] border-b border-[#a0a0a0]">
        <div className="-mt-px flex pl-[11px]">
          <TwoLine icon="cap" a="Итого: 1.81k GJ" b="Стабильно: 62.3%" className="w-[179px]" />
          <TwoLine icon="capSwap" a="+4.19 GJ/s" b="0%" centered />
        </div>
      </Section>
      <Section title="Targeting & Misc" frame="h-[100px] border-b border-[#a0a0a0]">
        <div className="-mt-px flex h-[80px] pl-[11px]">
          <div className="w-[150px] border-r border-[#a0a0a0] pt-[5px]">
            <Pairs cols="grid-cols-[104px_44px]" rows={[["Цели:", "8"], ["Дальность:", "85.3 km"], ["Разреш. сканера:", "402 mm"], ["Sensor str.:", "28.4"], ["Дальность дронов:", "84 km"]]} />
          </div>
          <div className="pt-[5px] pl-[6px]">
            <Pairs cols="grid-cols-[91px_44px]" rows={[["Скорость:", "1179 m/s"], ["Время разгона:", "32 s"], ["Сигнатура:", "220"], ["Скорость Варпа:", "4 AU/s"], ["Груз:", "480 m³"]]} />
          </div>
        </div>
      </Section>
      <Section title="Цена" menu frame="">
        <div className="-mt-px grid grid-cols-[98px_98px_90px] pl-[8px]">
          <TwoLine icon="ship" a="Корабль" b="14M ISK" />
          <TwoLine icon="fit" a="Фит" b="14.1M ISK" />
          <TwoLine icon="face" a="Персонаж" b="0 ISK" />
          <TwoLine icon="drones" a="Дроны" b="7.83M ISK" />
          <TwoLine icon="hold" a="Трюм" b="3.06M ISK" />
          <TwoLine icon="isk" a="Итого" b="39M ISK" />
        </div>
      </Section>
    </aside>
  );
}

export default function App() {
  return (
    <div className="relative flex h-[705px] w-[1185px] overflow-hidden bg-[#f0f0f0] font-['Open_Sans','Noto_Sans',sans-serif] text-[11.5px] tracking-[-0.1px] text-black">
      <Gradients />
      <main className="w-[875px]">
        <FittingTable />
        <Additions />
      </main>
      <StatsPanel />
      <div className="flex w-[2px] flex-col">
        <div className="h-[196px] bg-[#10131c]" />
        <div className="h-[40px] bg-[#8b8f9b]" />
        <div className="flex-1 bg-[#dfe5f0]" />
      </div>
    </div>
  );
}
